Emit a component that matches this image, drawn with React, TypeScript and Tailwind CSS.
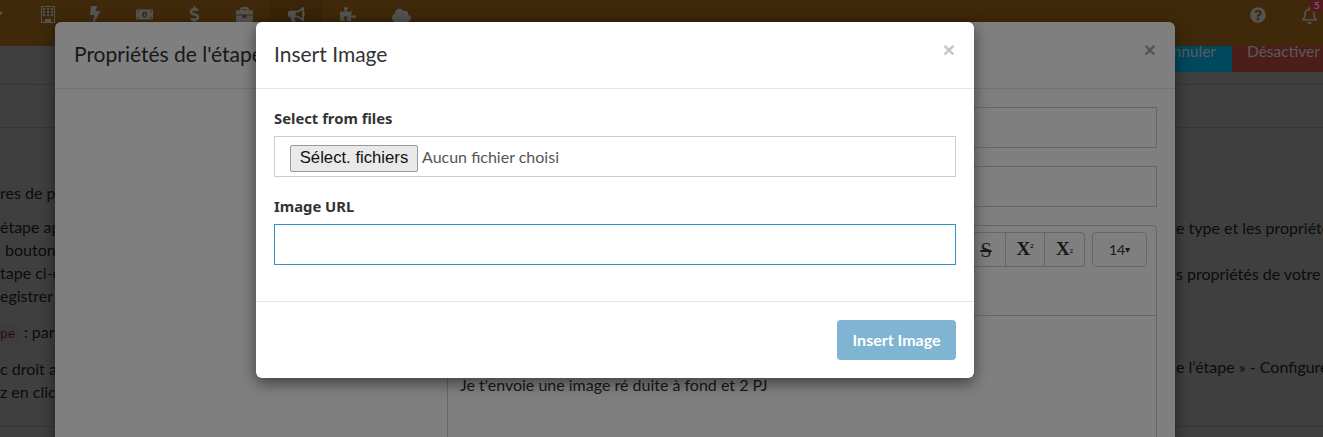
import type { ReactNode } from "react";
import { FaBolt, FaBriefcase, FaBullhorn, FaCloud, FaDollarSign, FaMoneyBillAlt, FaPuzzlePiece, FaQuestionCircle, FaRegBell, FaStar } from "react-icons/fa";

// fa4 style building, the react-icons one is too narrow
function BuildingIcon({ className }: { className?: string }) {
  return (
    <svg viewBox="0 0 14 17" width="14" height="17" fill="currentColor" className={className}>
      <path
        fillRule="evenodd"
        d="M0 0h14v17H0z M1 1v15h3v-3h6v3h3V1z M2 2h2v2H2z M6 2h2v2H6z M10 2h2v2h-2z M2 5h2v2H2z M6 5h2v2H6z M10 5h2v2h-2z M2 8h2v2H2z M6 8h2v2H6z M10 8h2v2h-2z"
      />
    </svg>
  );
}

const navIcons = [
  { icon: BuildingIcon, w: "w-[46px]", size: "" },
  { icon: FaBolt, w: "w-[48px]", size: "text-[16px]" },
  { icon: FaMoneyBillAlt, w: "w-[50px]", size: "text-[17px]" },
  { icon: FaDollarSign, w: "w-[50px]", size: "text-[17px]" },
  { icon: FaBriefcase, w: "w-[51px]", size: "text-[17px]" },
  { icon: FaBullhorn, w: "w-[52px]", size: "text-[17px]" },
  { icon: FaPuzzlePiece, w: "w-[52px]", size: "text-[16px]" },
  { icon: FaCloud, w: "w-[54px]", size: "text-[19px]" },
];

function PageBehind() {
  return (
    <div className="h-[437px] bg-white text-[16px] text-[#333]">
      {/* header and action buttons sit above the first backdrop */}
      <header className="relative z-10 flex h-[46px] items-start bg-[#805214]">
        <div className="flex h-[46px] w-[25px] items-start overflow-hidden pt-[6px]">
          <FaStar className="-ml-[13px] shrink-0 text-[16px] text-[#a8a8a8]" />
        </div>
        {navIcons.map(({ icon: Icon, w, size }, i) => (
          <div key={i} className={`flex h-[46px] ${w} justify-center pt-[6px] ${i === 5 ? "bg-[#744a12]" : ""}`}>
            <Icon className={`${size} text-[#a8a8a8]`} />
          </div>
        ))}
        <div className="ml-auto flex items-start">
          <FaQuestionCircle className="mt-[7px] mr-[35px] text-[16px] text-[#a8a8a8]" />
          <div className="relative mt-[7px] mr-[5px] w-[17px]">
            <FaRegBell className="text-[17px] text-[#a8a8a8]" />
            <span className="absolute -top-[7px] left-[9px] h-[12px] w-[14px] rounded-sm bg-[#b03040] text-center text-[10px] leading-[11px] font-bold text-[#ccc]">5</span>
          </div>
        </div>
      </header>
      <div className="relative z-10 flex h-[26px] justify-end text-[15.5px] leading-[10px] text-[#b4b4b4]">
        <div className="w-[100px] bg-[#0090bc] pr-[16px] text-right">Annuler</div>
        <div className="w-[91px] bg-[#963c32] pl-[15px]">Désactiver</div>
      </div>
      <div className="mt-[12px] h-[44px] border-y border-[#ddd]" />
      <div className="relative h-[299px] border-b border-[#ddd]">
        <div className="absolute top-[53px] left-0 leading-[23px] whitespace-nowrap">
          <p>res de pa</p>
          <div className="mt-[11px]">
            <p>étape ap</p>
            <p className="pl-[5px]">bouton</p>
            <p>tape ci-c</p>
            <p>egistrer</p>
          </div>
          <p className="mt-[13px]"><code className="rounded bg-[#f9f2f4] py-[2px] pr-[4px] font-['Liberation_Mono',monospace] text-[13px] text-[#c7254e]">pe</code> : par</p>
          <div className="mt-[11px]">
            <p>c droit a</p>
            <p>z en clic</p>
          </div>
        </div>
        <div className="absolute top-[52px] left-[1176px] leading-[23px] whitespace-nowrap">
          <p className="mt-[36px]">e type et les propriété</p>
          <p className="mt-[23px]">s propriétés de votre</p>
          <p className="mt-[70px]">e l’étape » - Configure</p>
        </div>
      </div>
    </div>
  );
}

function ToolBtn({ children, className }: { children: ReactNode; className?: string }) {
  return <div className={`flex h-[35px] items-center justify-center border border-[#ccc] bg-white text-[#333] ${className ?? ""}`}>{children}</div>;
}

function StepModal() {
  return (
    <div className="absolute top-[22px] left-[55px] z-20 h-[500px] w-[1120px] rounded-md bg-white shadow-[0_5px_15px_rgba(0,0,0,0.5)]">
      <div className="flex h-[67px] items-center justify-between border-b border-[#e5e5e5] px-[19px] text-[#333]">
        <h4 className="mb-[2px] text-[21px]">Propriétés de l'étape</h4>
        <span className="mb-[11px] font-['Liberation_Sans',sans-serif] text-[21px] leading-none font-bold text-[#aaa]">×</span>
      </div>
      <div className="mr-[18px] ml-[392px] flex flex-col gap-[18px] pt-[18px]">
        <div className="h-[41px] border border-[#ccc]" />
        <div className="h-[41px] border border-[#ccc]" />
        <div className="h-[400px] rounded-t border border-[#ccc]">
          <div className="h-[90px] border-b border-[#ccc] pt-[6px] pr-[9px]">
            <div className="flex justify-end gap-[7px]">
              <div className="flex font-['Liberation_Serif',serif] font-bold">
                <ToolBtn className="w-[40px] rounded-l text-[20px] font-normal line-through">S</ToolBtn>
                <ToolBtn className="-ml-px w-[40px] text-[19px]">X<sup className="text-[7px]">2</sup></ToolBtn>
                <ToolBtn className="-ml-px w-[41px] rounded-r text-[19px]">X<sub className="text-[7px]">2</sub></ToolBtn>
              </div>
              <ToolBtn className="w-[55px] rounded text-[14px]">14<span className="text-[10px]">▾</span></ToolBtn>
            </div>
          </div>
          <p className="pt-[57px] pl-[12px] text-[16px] text-[#333]">Je t'envoie une image ré duite à fond et 2 PJ</p>
        </div>
      </div>
    </div>
  );
}

function InsertImageModal() {
  return (
    <div className="absolute top-[22px] left-[256px] z-20 w-[718px] rounded-md bg-white text-[#333] shadow-[0_5px_15px_rgba(0,0,0,0.5)]">
      <div className="flex h-[67px] items-center justify-between border-b border-[#e5e5e5] pr-[19px] pl-[18px]">
        <h4 className="mb-[2px] text-[21px] font-normal">Insert Image</h4>
        <span className="mb-[11px] font-['Liberation_Sans',sans-serif] text-[21px] leading-none font-bold text-[#c4c4c4]">×</span>
      </div>
      <div className="border-b border-[#e5e5e5] px-[18px] pt-[19px] pb-[36px]">
        <label className="block font-['Noto_Sans',sans-serif] text-[14.8px] leading-[21px] font-bold">Select from files</label>
        <div className="mt-[7px] flex h-[41px] items-start border border-[#ccc] pt-[8px] pl-[15px]">
          <button className="h-[27px] w-[128px] rounded-[2px] border border-[#999] bg-[#e9e9e9] font-['Liberation_Sans',sans-serif] text-[16.7px] leading-none text-[#111]">Sélect. fichiers</button>
          <span className="ml-[4px] text-[16px] leading-[24px] text-[#555]">Aucun fichier choisi</span>
        </div>
        <label className="mt-[19px] block font-['Noto_Sans',sans-serif] text-[14.8px] leading-[21px] font-bold">Image URL</label>
        <input className="mt-[7px] block h-[41px] w-full border border-[#3291c8] outline-none" />
      </div>
      <div className="flex justify-end p-[18px]">
        <button className="h-[40px] w-[119px] rounded bg-[#7fb4d3] text-[16px] font-bold text-white">Insert Image</button>
      </div>
    </div>
  );
}

export default function App() {
  return (
    <div className="relative h-[437px] w-[1323px] overflow-hidden font-['Lato','Noto_Sans',sans-serif]">
      <PageBehind />
      <div className="absolute inset-0 bg-black/50" />
      <StepModal />
      <div className="absolute inset-0 z-20 bg-black/50" />
      <InsertImageModal />
    </div>
  );
}
